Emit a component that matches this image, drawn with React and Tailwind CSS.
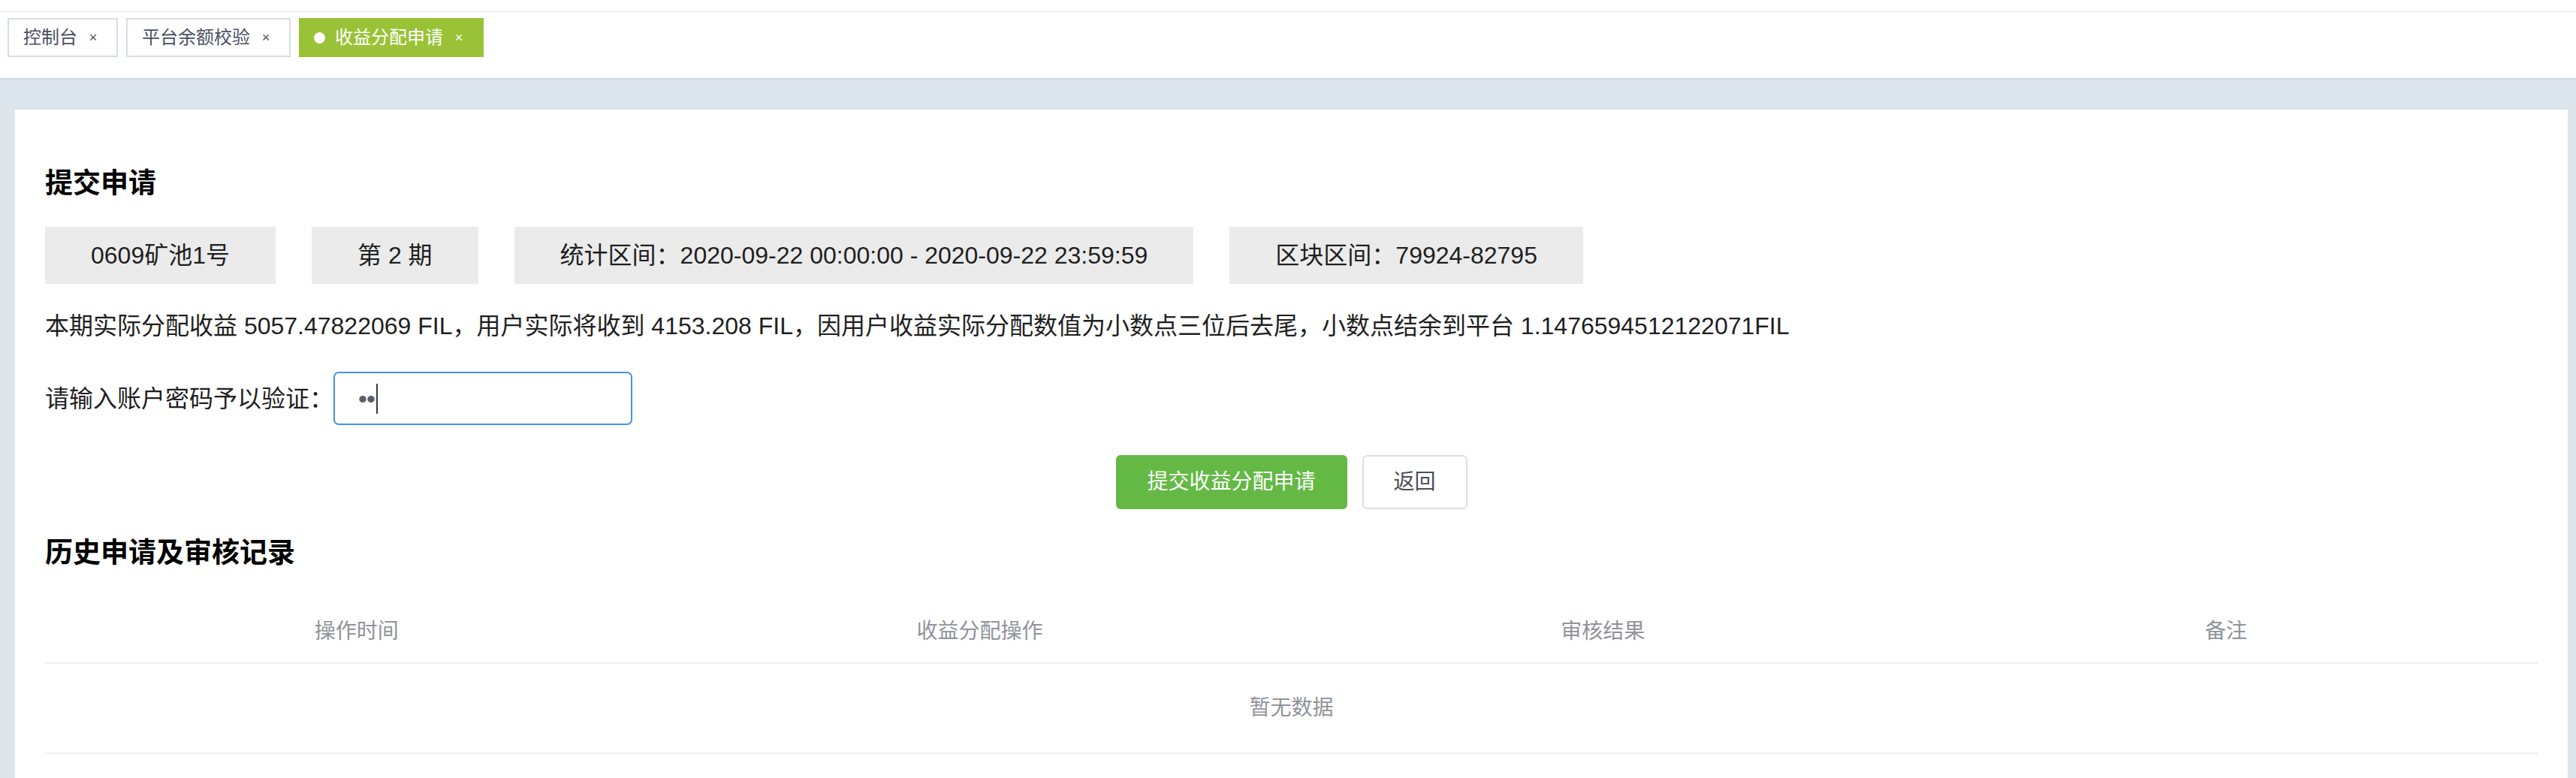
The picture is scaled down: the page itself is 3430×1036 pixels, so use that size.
import React from 'react';

const font = "font-['Liberation_Sans','Noto_Sans_CJK_SC',sans-serif]";

const tabs = [
    { label: '控制台', active: false },
    { label: '平台余额校验', active: false },
    { label: '收益分配申请', active: true },
];

const infoItems = ['0609矿池1号', '第 2 期', '统计区间：2020-09-22 00:00:00 - 2020-09-22 23:59:59', '区块区间：79924-82795'];

const columns = ['操作时间', '收益分配操作', '审核结果', '备注'];

const TagsView = () => (
    <div className="bg-white">
        <div className="h-[16px] border-b border-[#ececec]" />
        <div className="h-[90px] pt-[8px] pl-[10px] flex gap-[11px] items-start border-b-2 border-[#d0d8df]">
            {tabs.map((t) => (
                <div
                    key={t.label}
                    className={
                        t.active
                            ? 'h-[52px] flex items-center pl-[18px] pr-[24px] border-2 border-[#99c236] bg-[#99c236] text-white text-[24px]'
                            : 'h-[52px] flex items-center pl-[19px] pr-[24px] border-2 border-[#d8dce5] bg-white text-[#495060] text-[24px]'
                    }
                >
                    {t.active && <span className="w-[15px] h-[15px] rounded-full bg-white mr-[13px]" />}
                    <span>{t.label}</span>
                    <span className="ml-[14px] w-[14px] text-center text-[18px] leading-none">×</span>
                </div>
            ))}
        </div>
    </div>
);

const App = () => {
    return (
        <div className={`${font} min-h-screen bg-[#dce6ec]`}>
            <TagsView />

            <div className="pt-[40px] pl-[20px] pr-[11px]">
                <div className="bg-white px-[40px] pt-[74px] pb-[120px] text-[#1f1f1f]">
                    {/* 提交申请 */}
                    <h2 className="text-[37px] leading-[50px] font-bold text-black">提交申请</h2>

                    <div className="flex gap-[48px] mt-[32px]">
                        {infoItems.map((item) => (
                            <div key={item} className="bg-[#ebebeb] h-[76px] px-[61px] flex items-center text-[32px] whitespace-nowrap">
                                {item}
                            </div>
                        ))}
                    </div>

                    <p className="mt-[32px] text-[32px] leading-[48px] whitespace-nowrap">
                        本期实际分配收益 5057.47822069 FIL，用户实际将收到 4153.208 FIL，因用户收益实际分配数值为小数点三位后去尾，小数点结余到平台 1.1476594512122071FIL
                    </p>

                    <div className="mt-[37px] flex items-center">
                        <span className="text-[32px] leading-[48px]">请输入账户密码予以验证：</span>
                        <div className="w-[398px] h-[71px] border-2 border-[#4294e6] rounded-[7px] flex items-center pl-[31px]">
                            <span className="text-[34px] leading-none text-[#5a5e66] tracking-[-1px]">••</span>
                            <span className="w-[2px] h-[40px] bg-[#3a3a3a] ml-[2px]" />
                        </div>
                    </div>

                    <div className="mt-[40px] flex justify-center gap-[20px]">
                        <button className="w-[308px] h-[72px] rounded-[6px] bg-[#63b944] text-white text-[28px]">提交收益分配申请</button>
                        <button className="w-[140px] h-[72px] rounded-[6px] border-2 border-[#dcdfe6] bg-white text-[#4a4d52] text-[28px]">返回</button>
                    </div>

                    {/* 历史记录 */}
                    <h2 className="mt-[34px] text-[37px] leading-[50px] font-bold text-black">历史申请及审核记录</h2>

                    <div className="mt-[38px]">
                        <div className="grid grid-cols-4 h-[84px] border-b-2 border-[#ebeef5] text-[28px] text-[#909399]">
                            {columns.map((c) => (
                                <div key={c} className="flex items-center justify-center">{c}</div>
                            ))}
                        </div>
                        <div className="h-[120px] flex items-center justify-center border-b-2 border-[#ebeef5] text-[28px] text-[#909399]">
                            暂无数据
                        </div>
                    </div>
                </div>
            </div>
        </div>
    );
};

export default App;
